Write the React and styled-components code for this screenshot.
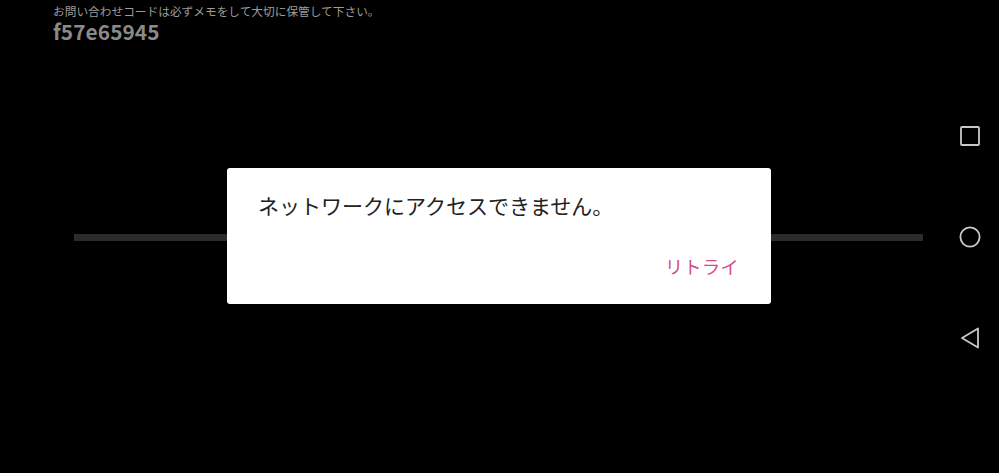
import React from "react";
import styled, { createGlobalStyle } from "styled-components";

const Global = createGlobalStyle`
  html, body {
    margin: 0;
    padding: 0;
    background: #000;
    height: 100%;
  }
  #root {
    height: 100%;
  }
  * { box-sizing: border-box; }
`;

const Screen = styled.div`
  width: 999px;
  height: 473px;
  display: flex;
  background: #000;
  font-family: "Noto Sans CJK JP", "Noto Sans", sans-serif;
  overflow: hidden;
`;

const Main = styled.div`
  flex: 1;
  display: flex;
  flex-direction: column;
`;

const Header = styled.div`
  padding: 2px 0 0 53px;
  display: flex;
  flex-direction: column;
`;

const Note = styled.div`
  font-size: 11.7px;
  line-height: 17px;
  color: #9c9c9c;
`;

const Code = styled.div`
  font-size: 20.8px;
  font-weight: 700;
  line-height: 24px;
  color: #8a8a8a;
  letter-spacing: 0.1px;
`;

const Track = styled.div`
  height: 7px;
  margin: 191px 17px 0 74px;
  background: #2b2b2b;
`;

const Nav = styled.div`
  width: 59px;
  display: flex;
  flex-direction: column;
  align-items: center;
  padding-top: 125px;
  gap: 79px;
`;

const NavButton = styled.div`
  width: 22px;
  height: 22px;
  display: flex;
  align-items: center;
  justify-content: center;
`;

const Overlay = styled.div`
  position: fixed;
  inset: 0;
  display: flex;
  align-items: center;
  justify-content: center;
  width: 999px;
  height: 473px;
`;

const Dialog = styled.div`
  width: 544px;
  height: 136px;
  background: #fff;
  border-radius: 3px;
  display: flex;
  flex-direction: column;
  padding: 22px 32px 0 31px;
  margin: -1px 1px 0 0;
`;

const Message = styled.div`
  font-size: 21px;
  line-height: 30px;
  color: #222;
`;

const Actions = styled.div`
  display: flex;
  justify-content: flex-end;
  margin-top: 34px;
  padding-right: 0;
`;

const ActionButton = styled.div`
  font-size: 18px;
  line-height: 24px;
  color: ${(p) => p.color || "#d24b85"};
  letter-spacing: 0.5px;
`;

export default function App() {
  return (
    <>
      <Global />
      <Screen>
        <Main>
          <Header>
            <Note>お問い合わせコードは必ずメモをして大切に保管して下さい。</Note>
            <Code>f57e65945</Code>
          </Header>
          <Track />
        </Main>
        <Nav>
          <NavButton>
            <svg width="20" height="20" viewBox="0 0 20 20">
              <rect x="1" y="1" width="18" height="18" fill="none" stroke="#c8c8c8" strokeWidth="1.8" rx="1" />
            </svg>
          </NavButton>
          <NavButton>
            <svg width="22" height="22" viewBox="0 0 22 22">
              <circle cx="11" cy="11" r="9.6" fill="none" stroke="#c8c8c8" strokeWidth="1.8" />
            </svg>
          </NavButton>
          <NavButton>
            <svg width="20" height="22" viewBox="0 0 20 22">
              <path d="M18 1.5 L2 11 L18 20.5 Z" fill="none" stroke="#c8c8c8" strokeWidth="1.8" strokeLinejoin="round" />
            </svg>
          </NavButton>
        </Nav>
        <Overlay>
          <Dialog>
            <Message>ネットワークにアクセスできません。</Message>
            <Actions>
              <ActionButton>リトライ</ActionButton>
            </Actions>
          </Dialog>
        </Overlay>
      </Screen>
    </>
  );
}
